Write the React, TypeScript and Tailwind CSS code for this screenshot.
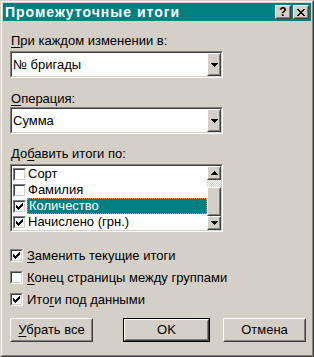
import React from "react";

const FONT = { fontFamily: '"Liberation Sans", Arial, sans-serif' };

const Check = () => (
  <svg width="7" height="7" viewBox="0 0 7 7" shapeRendering="crispEdges">
    <path
      d="M6 0h1v3h-1zM5 1h1v3h-1zM4 2h1v3h-1zM3 3h1v3h-1zM2 4h1v3h-1zM1 3h1v3h-1zM0 2h1v3h-1z"
      fill="#000"
    />
  </svg>
);

const ArrowDown = () => (
  <svg width="7" height="4" viewBox="0 0 7 4" shapeRendering="crispEdges">
    <path d="M0 0h7v1h-7zM1 1h5v1h-5zM2 2h3v1h-3zM3 3h1v1h-1z" fill="#000" />
  </svg>
);

const ArrowUp = () => (
  <svg width="7" height="4" viewBox="0 0 7 4" shapeRendering="crispEdges">
    <path d="M3 0h1v1h-1zM2 1h3v1h-3zM1 2h5v1h-5zM0 3h7v1h-7z" fill="#000" />
  </svg>
);

// sunken 2px frame (fields, checkboxes)
const Sunken = ({ className = "", children }: { className?: string; children?: React.ReactNode }) => (
  <div className={`border border-t-[#808080] border-l-[#808080] border-b-white border-r-white ${className}`}>
    <div className="w-full h-full border border-t-[#404040] border-l-[#404040] border-b-[#d4d0c8] border-r-[#d4d0c8] bg-white">
      {children}
    </div>
  </div>
);

// raised 2px frame (buttons)
const Raised = ({ className = "", children }: { className?: string; children?: React.ReactNode }) => (
  <div className={`border border-t-white border-l-white border-b-[#404040] border-r-[#404040] bg-[#d4d0c8] ${className}`}>
    <div className="w-full h-full border border-t-[#d4d0c8] border-l-[#d4d0c8] border-b-[#808080] border-r-[#808080] flex items-center justify-center">
      {children}
    </div>
  </div>
);

const CheckBox = ({ checked }: { checked?: boolean }) => (
  <Sunken className="w-[13px] h-[13px] shrink-0">
    <div className="w-full h-full flex items-center justify-center">{checked && <Check />}</div>
  </Sunken>
);

const Combo = ({ value }: { value: string }) => (
  <Sunken className="w-[213px] h-[27px]">
    <div className="flex h-full">
      <div className="flex-1 flex items-center pl-[1px] text-[13px] text-black">{value}</div>
      <Raised className="w-[14px] h-full">
        <ArrowDown />
      </Raised>
    </div>
  </Sunken>
);

const ListRow = ({ label, checked, selected }: { label: string; checked?: boolean; selected?: boolean }) => (
  <div className="flex items-center h-[16px] pl-[1px]">
    <CheckBox checked={checked} />
    <div
      className={`flex-1 h-full ml-[1px] pl-[1px] flex items-center text-[13px] ${
        selected ? "bg-[#008080] text-white border border-dotted border-[#f08070]" : "text-black"
      }`}
    >
      {label}
    </div>
  </div>
);

const Option = ({ checked, children }: { checked?: boolean; children: React.ReactNode }) => (
  <div className="flex items-center h-[13px] gap-[4px] text-[13px] leading-[13px] text-black">
    <CheckBox checked={checked} />
    <span>{children}</span>
  </div>
);

export default function App() {
  return (
    <div className="w-[314px] h-[357px] border border-t-[#d4d0c8] border-l-[#d4d0c8] border-b-[#404040] border-r-[#404040]" style={FONT}>
      <div className="w-full h-full border border-t-white border-l-white border-b-[#808080] border-r-[#808080] bg-[#d4d0c8] p-[1px] flex flex-col">
        {/* title bar */}
        <div className="h-[18px] bg-[#008080] flex items-center pl-[2px] pr-[2px]">
          <span className="flex-1 text-white font-bold text-[14px] tracking-[1px] leading-[18px]">Промежуточные итоги</span>
          <Raised className="w-[16px] h-[14px]">
            <span className="text-[12px] font-bold leading-none text-black">?</span>
          </Raised>
          <Raised className="w-[16px] h-[14px] ml-[2px]">
            <svg width="8" height="7" viewBox="0 0 8 7" shapeRendering="crispEdges">
              <path d="M0 0h2v1h-2zM6 0h2v1h-2zM1 1h2v1h-2zM5 1h2v1h-2zM2 2h4v1h-4zM3 3h2v1h-2zM2 4h4v1h-4zM1 5h2v1h-2zM5 5h2v1h-2zM0 6h2v1h-2zM6 6h2v1h-2z" fill="#000" />
            </svg>
          </Raised>
        </div>

        <div className="flex flex-col pl-[7px] text-[13px] text-black">
          <div className="mt-[12px] h-[16px] leading-[16px] pl-[1px]">
            <span className="underline underline-offset-2">П</span>ри каждом изменении в:
          </div>
          <div className="mt-[2px]">
            <Combo value="№ бригады" />
          </div>

          <div className="mt-[13px] h-[16px] leading-[16px] pl-[1px]">
            <span className="underline underline-offset-2">О</span>перация:
          </div>
          <div>
            <Combo value="Сумма" />
          </div>

          <div className="mt-[12px] h-[16px] leading-[16px] pl-[1px]">
            До<span className="underline underline-offset-2">б</span>авить итоги по:
          </div>
          <Sunken className="mt-[2px] w-[213px] h-[68px]">
            <div className="flex h-full">
              <div className="flex-1 flex flex-col">
                <ListRow label="Сорт" />
                <ListRow label="Фамилия" />
                <ListRow label="Количество" checked selected />
                <ListRow label="Начислено (грн.)" checked />
              </div>
              <div className="w-[14px] h-full flex flex-col">
                <Raised className="w-full h-[14px]">
                  <ArrowUp />
                </Raised>
                <div className="h-[7px] bg-[repeating-conic-gradient(#ffffff_0_25%,#d4d0c8_0_50%)] bg-[length:2px_2px]" />
                <Raised className="w-full flex-1" />
                <Raised className="w-full h-[14px]">
                  <ArrowDown />
                </Raised>
              </div>
            </div>
          </Sunken>

          <div className="mt-[17px] flex flex-col gap-[9px]">
            <Option checked>
              <span className="underline underline-offset-2">З</span>аменить текущие итоги
            </Option>
            <Option>
              <span className="underline underline-offset-2">К</span>онец страницы между группами
            </Option>
            <Option checked>
              Ито<span className="underline underline-offset-2">г</span>и под данными
            </Option>
          </div>

          <div className="mt-[12px] flex items-start">
            <Raised className="w-[83px] h-[24px]">
              <span>
                <span className="underline underline-offset-2">У</span>брать все
              </span>
            </Raised>
            <div className="ml-[30px] w-[87px] h-[24px] border border-black">
              <Raised className="w-full h-full">OK</Raised>
            </div>
            <Raised className="ml-[13px] w-[83px] h-[24px]">Отмена</Raised>
          </div>
        </div>
      </div>
    </div>
  );
}
